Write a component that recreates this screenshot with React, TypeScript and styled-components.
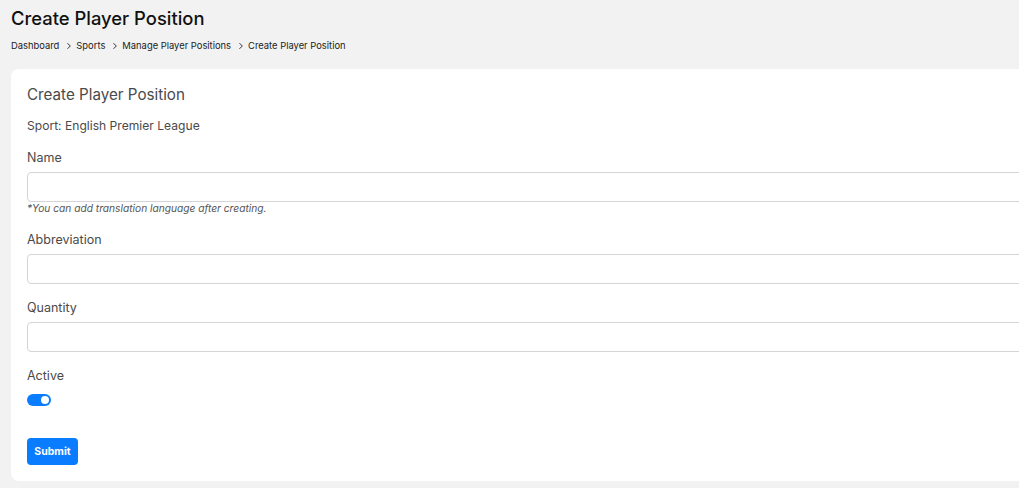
import React, { useState } from 'react'
import styled, { createGlobalStyle } from 'styled-components'

const GlobalStyle = createGlobalStyle`
  * { box-sizing: border-box; }
  html, body {
    margin: 0;
    background: #f2f2f2;
    font-family: Inter, "Noto Sans", sans-serif;
    overflow: hidden;
  }
`

const Page = styled.div`
  padding: 0 0 0 11px;
  width: 1060px;
`

const PageTitle = styled.h1`
  margin: 0;
  padding-top: 6px;
  font-size: 18.4px;
  line-height: 24px;
  font-weight: 500;
  color: #111;
`

const Crumbs = styled.nav`
  display: flex;
  align-items: center;
  gap: 3px;
  margin-top: 9px;
  font-size: 9.4px;
  line-height: 14px;
  color: #1c1c1c;
`

const Chevron = styled.svg`
  width: 8px;
  height: 8px;
  margin: 0 0 0 3px;
`

const Card = styled.section`
  margin-top: 16px;
  background: #fff;
  border-radius: 8px;
  padding: 15px 16px 16px;
`

const CardTitle = styled.h2`
  margin: 0;
  font-size: 15.2px;
  line-height: 22px;
  font-weight: 400;
  color: #4a4a4a;
`

const Meta = styled.p`
  margin: 11px 0 0;
  font-size: 12.1px;
  line-height: 18px;
  color: #4a4a4a;
`

const Group = styled.div<{ $gap?: number }>`
  margin-top: ${({ $gap }) => $gap ?? 15}px;
`

const Label = styled.label`
  display: block;
  font-size: 12.5px;
  line-height: 18px;
  color: #4a4a4a;
  margin-bottom: 5px;
`

const Input = styled.input`
  display: block;
  width: 100%;
  height: 30px;
  border: 1px solid #d4d4d9;
  border-radius: 4px;
  padding: 0 10px;
  font-family: inherit;
  font-size: 13px;
  outline: none;
`

const Hint = styled.small`
  display: block;
  font-size: 10.2px;
  line-height: 13px;
  font-style: italic;
  color: #555;
`

const Toggle = styled.button<{ $on: boolean }>`
  position: relative;
  display: block;
  margin-top: 9px;
  width: 24px;
  height: 12px;
  padding: 0;
  border: none;
  border-radius: 6px;
  background: ${({ $on }) => ($on ? '#0a7cff' : '#c9c9c9')};
  cursor: pointer;

  &::after {
    content: '';
    position: absolute;
    top: 2px;
    left: ${({ $on }) => ($on ? '14px' : '2px')};
    width: 8px;
    height: 8px;
    border-radius: 50%;
    background: #fff;
  }
`

const SubmitButton = styled.button`
  display: block;
  margin-top: 32px;
  width: 51px;
  height: 27px;
  border: none;
  border-radius: 4px;
  background: #0a7cff;
  color: #fff;
  font-family: inherit;
  font-size: 10.5px;
  font-weight: 700;
  cursor: pointer;
`

const ChevronIcon = () => (
  <Chevron viewBox="0 0 8 8" fill="none">
    <path d="M2.5 1.2 5.3 4 2.5 6.8" stroke="#333" strokeWidth="1" />
  </Chevron>
)

const crumbs = ['Dashboard', 'Sports', 'Manage Player Positions', 'Create Player Position']

export default function App() {
  const [active, setActive] = useState(true)

  return (
    <>
      <GlobalStyle />
      <Page>
        <PageTitle>Create Player Position</PageTitle>
        <Crumbs>
          {crumbs.map((item, i) => (
            <React.Fragment key={item}>
              {i > 0 && <ChevronIcon />}
              <span>{item}</span>
            </React.Fragment>
          ))}
        </Crumbs>
        <Card>
          <CardTitle>Create Player Position</CardTitle>
          <Meta>Sport: English Premier League</Meta>
          <Group $gap={14}>
            <Label>Name</Label>
            <Input />
            <Hint>*You can add translation language after creating.</Hint>
          </Group>
          <Group $gap={16}>
            <Label>Abbreviation</Label>
            <Input />
          </Group>
          <Group>
            <Label>Quantity</Label>
            <Input />
          </Group>
          <Group>
            <Label as="span">Active</Label>
            <Toggle $on={active} onClick={() => setActive((v) => !v)} />
          </Group>
          <SubmitButton>Submit</SubmitButton>
        </Card>
      </Page>
    </>
  )
}
